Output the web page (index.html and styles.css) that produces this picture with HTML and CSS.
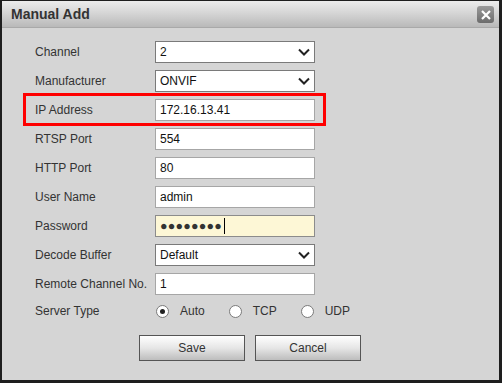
FILE: index.html
```html
<!DOCTYPE html>
<html lang="en">
<head>
    <meta charset="UTF-8">
    <title>Manual Add</title>
    <link rel="stylesheet" href="styles.css">
</head>
<body>
    <div class="dialog">
        <div class="title-bar">
            <span class="title">Manual Add</span>
            <button class="close-button" aria-label="Close">
                <svg width="10" height="10" viewBox="0 0 10 10"><path d="M1 1L9 9M9 1L1 9" stroke="#fff" stroke-width="2.2"/></svg>
            </button>
        </div>

        <div class="dialog-body">
            <div class="form-row">
                <label>Channel</label>
                <div class="select"><span>2</span><svg class="arrow" width="12" height="8" viewBox="0 0 12 8"><path d="M1 1.5L6 6.5L11 1.5" fill="none" stroke="#222" stroke-width="2"/></svg></div>
            </div>
            <div class="form-row">
                <label>Manufacturer</label>
                <div class="select"><span>ONVIF</span><svg class="arrow" width="12" height="8" viewBox="0 0 12 8"><path d="M1 1.5L6 6.5L11 1.5" fill="none" stroke="#222" stroke-width="2"/></svg></div>
            </div>
            <div class="form-row highlighted">
                <label>IP Address</label>
                <div class="text-input">172.16.13.41</div>
            </div>
            <div class="form-row">
                <label>RTSP Port</label>
                <div class="text-input">554</div>
            </div>
            <div class="form-row">
                <label>HTTP Port</label>
                <div class="text-input">80</div>
            </div>
            <div class="form-row">
                <label>User Name</label>
                <div class="text-input">admin</div>
            </div>
            <div class="form-row">
                <label>Password</label>
                <div class="text-input password"><span class="dots">&#9679;&#9679;&#9679;&#9679;&#9679;&#9679;&#9679;&#9679;</span><span class="caret"></span></div>
            </div>
            <div class="form-row">
                <label>Decode Buffer</label>
                <div class="select"><span>Default</span><svg class="arrow" width="12" height="8" viewBox="0 0 12 8"><path d="M1 1.5L6 6.5L11 1.5" fill="none" stroke="#222" stroke-width="2"/></svg></div>
            </div>
            <div class="form-row">
                <label>Remote Channel No.</label>
                <div class="text-input">1</div>
            </div>
            <div class="form-row server-type">
                <label>Server Type</label>
                <div class="radios">
                    <span class="radio checked"></span><span class="radio-label">Auto</span>
                    <span class="radio"></span><span class="radio-label">TCP</span>
                    <span class="radio"></span><span class="radio-label">UDP</span>
                </div>
            </div>

            <div class="actions">
                <button class="btn">Save</button>
                <button class="btn">Cancel</button>
            </div>
        </div>
    </div>
</body>
</html>
```

FILE: styles.css
```css
html, body {
    margin: 0;
    padding: 0;
}
body {
    width: 502px;
    height: 383px;
    background: #1e1e1e;
    font-family: "Liberation Sans", Arial, sans-serif;
    font-size: 12px;
    color: #333;
    overflow: hidden;
}
.dialog {
    margin: 1px 3px 0 2px;
    height: 379px;
    background: #d5d5d5;
    display: flex;
    flex-direction: column;
}
.title-bar {
    height: 26px;
    border-bottom: 1px solid #a9a9a9;
    background: linear-gradient(#ececec, #d6d6d6 45%, #b9b9b9);
    display: flex;
    align-items: center;
    justify-content: space-between;
    padding: 0 5px 0 9px;
}
.title {
    font-weight: bold;
    font-size: 14px;
    color: #333;
}
.close-button {
    width: 17px;
    height: 17px;
    padding: 0;
    border: none;
    border-radius: 3px;
    background: linear-gradient(#9a9a9a, #6c6c6c);
    display: flex;
    align-items: center;
    justify-content: center;
    margin-top: 1px;
}
.dialog-body {
    padding: 13px 0 0 33px;
}
.form-row {
    position: relative;
    display: flex;
    align-items: center;
    height: 22px;
    margin-bottom: 7px;
}
.form-row label {
    width: 120px;
    flex: none;
}
.highlighted::before {
    content: "";
    position: absolute;
    left: -12px;
    top: -6px;
    width: 297px;
    height: 27px;
    border: 3px solid #ff0000;
}
.select, .text-input {
    box-sizing: border-box;
    width: 160px;
    height: 22px;
    background: #fff;
    display: flex;
    align-items: center;
    padding-left: 4px;
    color: #111;
}
.select {
    border: 1px solid #7a7a7a;
    justify-content: space-between;
    padding-right: 4px;
}
.text-input {
    border: 1px solid #a6a6a6;
}
.password {
    background: #fdf7d6;
    border-color: #8c8c8c;
}
.dots {
    font-size: 12.5px;
    letter-spacing: 0.2px;
    color: #333;
}
.caret {
    display: inline-block;
    width: 1px;
    height: 16px;
    background: #000;
    margin-left: 2px;
}
.server-type {
    height: 18px;
}
.radios {
    display: flex;
    align-items: center;
}
.radio {
    box-sizing: border-box;
    width: 13px;
    height: 13px;
    border: 1px solid #7a7a7a;
    border-radius: 50%;
    background: #fff;
    margin-left: 1px;
    position: relative;
}
.radio.checked::after {
    content: "";
    position: absolute;
    left: 3px;
    top: 3px;
    width: 5px;
    height: 5px;
    border-radius: 50%;
    background: #222;
}
.radio-label {
    margin-left: 11px;
    margin-right: 23px;
}
.actions {
    display: flex;
    gap: 10px;
    padding: 8px 0 0 104px;
}
.btn {
    width: 106px;
    height: 26px;
    border: 1px solid #555;
    background: linear-gradient(#ffffff, #e6e6e6 50%, #bdbdbd);
    font-family: "Liberation Sans", Arial, sans-serif;
    font-size: 12px;
    color: #333;
    padding: 0;
}
```
